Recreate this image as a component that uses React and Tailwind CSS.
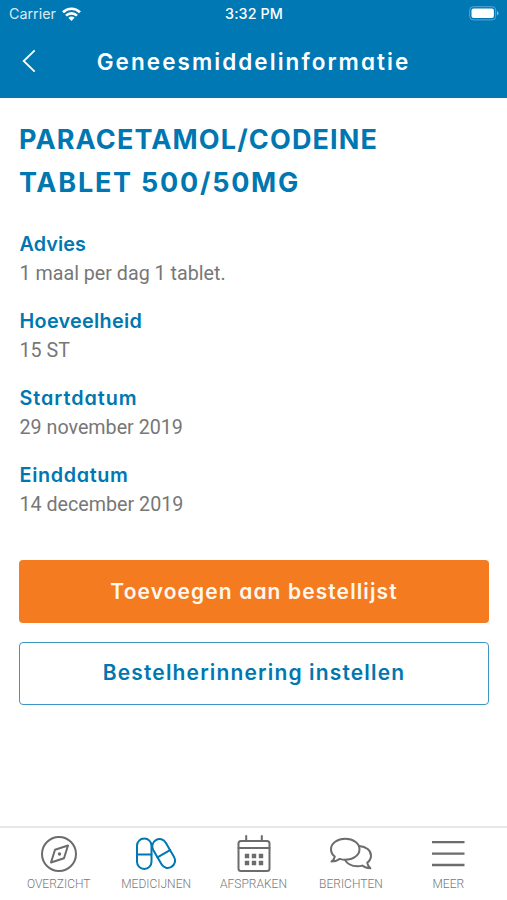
import React from "react";

const fields = [
  { label: "Advies", value: "1 maal per dag 1 tablet.", cls: "tracking-[0.1px]" },
  { label: "Hoeveelheid", value: "15 ST", cls: "tracking-[0.3px]" },
  { label: "Startdatum", value: "29 november 2019", cls: "tracking-[0.95px]" },
  { label: "Einddatum", value: "14 december 2019", cls: "tracking-[0.65px]" },
];

const brandFont = "font-['Inter',sans-serif] [font-feature-settings:'cv11']";

function StatusBar() {
  return (
    <div className="flex h-7 items-center justify-between pl-[9px] pr-[8px] font-['Inter',sans-serif] text-[14.3px] text-white">
      <div className="flex w-[100px] items-center gap-[6px]">
        <span className="text-[#d8eaf4]">Carrier</span>
        <svg width="19" height="15" viewBox="0 0 19 15" fill="none" stroke="white" strokeWidth="2.6">
          <path d="M1 5.3C5.8 0.6 13.2 0.6 18 5.3" />
          <path d="M4 8.6c3.1-3 7.9-3 11 0" />
          <path d="M6.4 10.8c1.8-1.6 4.4-1.6 6.2 0L9.5 14z" fill="white" stroke="none" />
        </svg>
      </div>
      <span className="font-medium tracking-[0.1px]">3:32 PM</span>
      <div className="-mt-[2px] flex w-[100px] justify-end">
        <svg width="30" height="15" viewBox="0 0 30 15" fill="none">
          <rect x="0.7" y="0.7" width="26" height="13.2" rx="3.6" stroke="#5ba6d0" strokeWidth="1" />
          <rect x="2.5" y="2.5" width="22.4" height="9.6" rx="2" fill="white" />
          <path d="M28 5v4.6q1.6-.8 1.6-2.3T28 5" fill="#79b5d8" />
        </svg>
      </div>
    </div>
  );
}

function Tab({ label, children }) {
  return (
    <a className="flex flex-1 flex-col items-center">
      <svg width="44" height="40" viewBox="0 0 44 40" fill="none" strokeWidth="2" stroke="#6c6c6c" strokeLinecap="round" strokeLinejoin="round">
        {children}
      </svg>
      <span className="mt-[2px] font-['Roboto',sans-serif] text-[12px] leading-[16px] font-light text-[#777]">{label}</span>
    </a>
  );
}

export default function App() {
  return (
    <div className="flex h-[900px] w-[507px] flex-col bg-white">
      <header className="h-[98px] bg-[#0078b4]">
        <StatusBar />
        <div className="flex h-[66px] items-center text-white">
          <button className="flex w-[58px] justify-center">
            <svg width="14" height="24" viewBox="0 0 14 24" fill="none" stroke="white" strokeWidth="1.8">
              <path d="M12.7 1.3 1.7 12l11 10.7" />
            </svg>
          </button>
          <h1 className={`flex-1 pt-[2px] pr-[58px] text-center text-[22.5px] font-semibold tracking-[2.05px] ${brandFont}`}>
            Geneesmiddelinformatie
          </h1>
        </div>
      </header>

      <main className="flex-1 pr-[18px] pl-[19px] pt-[20px]">
        <h2 className={`text-[27px] leading-[43px] font-bold text-[#0077b0] ${brandFont}`}>
          <span className="block tracking-[1.15px]">PARACETAMOL/CODEINE</span>
          <span className="block tracking-[1.75px]">TABLET 500/50MG</span>
        </h2>
        <dl className="mt-[25px] flex flex-col gap-[17px] pl-[0.5px]">
          {fields.map((f) => (
            <div key={f.label}>
              <dt className={`text-[19.8px] leading-[30px] font-semibold text-[#0077b0] ${f.cls} ${brandFont}`}>{f.label}</dt>
              <dd className="font-['Roboto',sans-serif] text-[19.7px] leading-[30px] text-[#777]">{f.value}</dd>
            </div>
          ))}
        </dl>
        <div className="mt-[40px] flex flex-col gap-[19px]">
          <button className={`h-[63px] rounded-[4px] bg-[#f47b20] text-[21px] font-semibold tracking-[1.1px] text-[#fff8ee] ${brandFont}`}>
            Toevoegen aan bestellijst
          </button>
          <button className={`h-[63px] rounded-[4px] border-[1.5px] border-[#3d97c4] pb-[2px] text-[21px] font-semibold tracking-[1.15px] text-[#0077b0] ${brandFont}`}>
            Bestelherinnering instellen
          </button>
        </div>
      </main>

      <nav className="flex h-[74px] border-t-2 border-[#e8e8e8] px-[10px] pt-[6px]">
        <Tab label="OVERZICHT">
          <circle cx="22" cy="20" r="17" />
          <path d="m31 11.5-4 12.8-13 4.2 4-12.8z" />
          <circle cx="22.5" cy="20" r="1.7" fill="#6c6c6c" stroke="none" />
        </Tab>
        <Tab label="MEDICIJNEN">
          <g stroke="#0077b0">
            <rect x="3" y="4.5" width="14.5" height="30.5" rx="7.2" />
            <path d="M3 20.5h14.5" />
            <g transform="rotate(-30 29.7 19.7)">
              <rect x="22.5" y="4" width="14.5" height="31" rx="7.2" />
              <path d="M22.5 19.7H37" />
            </g>
          </g>
        </Tab>
        <Tab label="AFSPRAKEN">
          <rect x="6.5" y="7" width="31" height="30" rx="2.5" />
          <path d="M6.5 14h31M14.2 2v5M29.8 2v5" />
          <g fill="#6c6c6c" stroke="none">
            <path d="M12.8 19.8h4.4v4.4h-4.4zM19.8 19.8h4.4v4.4h-4.4zM26.8 19.8h4.4v4.4h-4.4zM12.8 26.8h4.4v4.4h-4.4zM19.8 26.8h4.4v4.4h-4.4zM26.8 26.8h4.4v4.4h-4.4z" />
          </g>
        </Tab>
        <Tab label="BERICHTEN">
          <path d="M5.8 22.5C3.3 20.6 2 18 2 15.2 2 9.3 8.4 4.7 16.3 4.7s14.2 4.6 14.2 10.5-6.3 10.6-14.2 10.6c-2 0-3.8-.3-5.500-.9-2.300 1.700-5 2.700-8.300 2.700 1.900-1.500 3-3 3.300-5.100z" />
          <path d="M30.300 12c6.700.5 11.700 4.500 11.700 9.700 0 2.800-1.400 5.200-3.800 7 .3 2.200 1.200 4 3.200 5.600-3.200 0-6-.9-8.200-2.700-1.500.4-3 .6-4.600.6-5.800 0-10.700-2.600-12.600-6.300" />
        </Tab>
        <Tab label="MEER">
          <path d="M6 8.2h32.5M6 19.6h32.5M6 31h32.5" strokeWidth="2.3" strokeLinecap="butt" />
        </Tab>
      </nav>
    </div>
  );
}
